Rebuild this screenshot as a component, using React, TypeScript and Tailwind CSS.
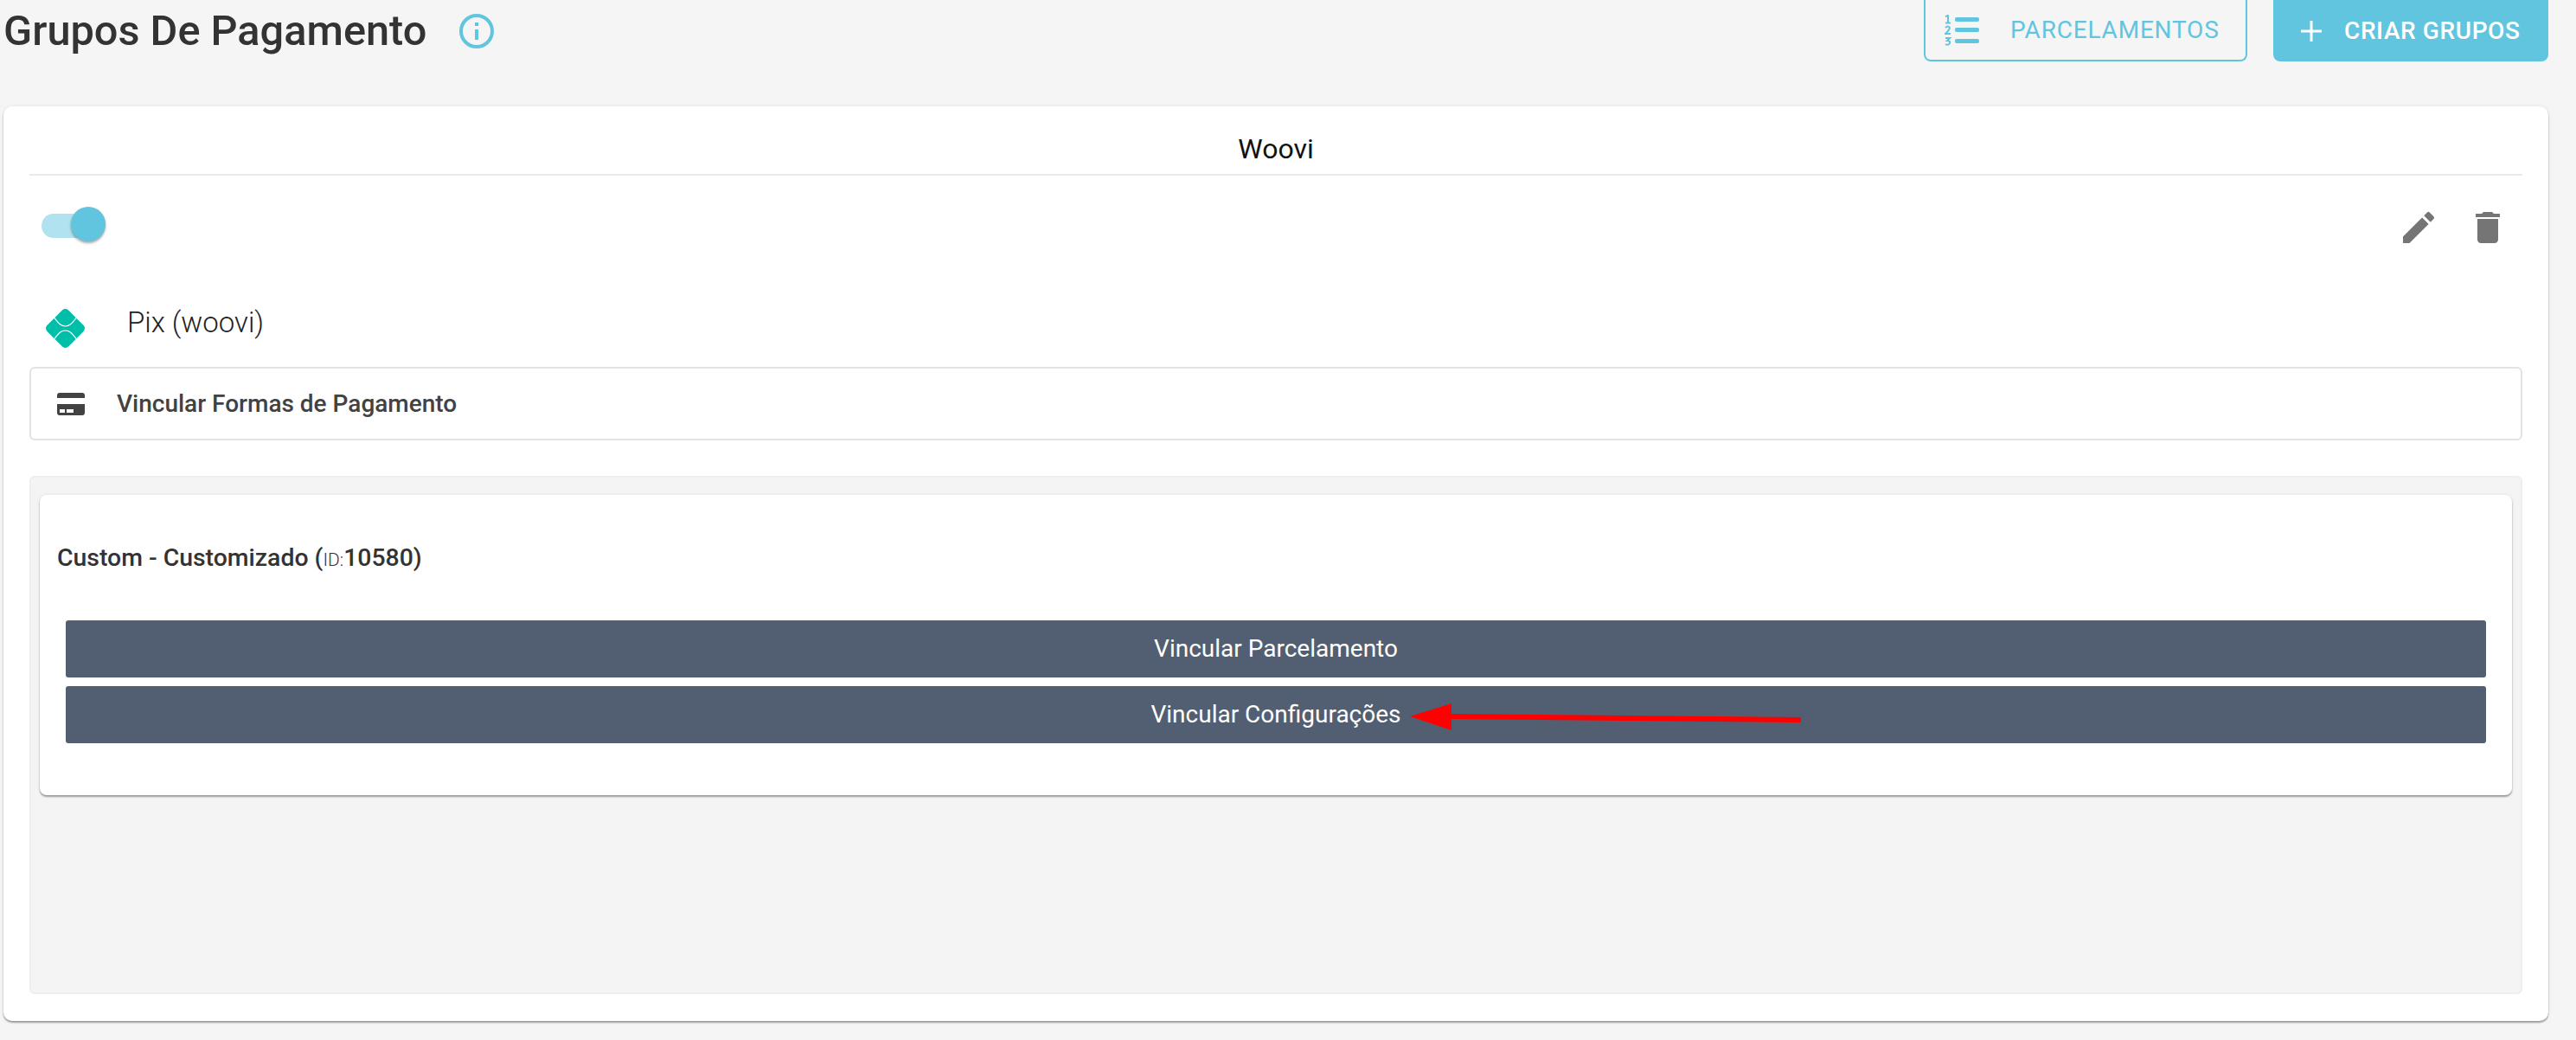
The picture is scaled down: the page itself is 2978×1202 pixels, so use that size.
import React from "react";

const F = "[font-family:Roboto,sans-serif]";

function ListIcon() {
  return (
    <svg viewBox="0 0 40 36" className="h-[36px] w-[40px] shrink-0">
      <g fill="#62c5df">
        <rect x="12" y="3" width="28" height="5" rx="2" />
        <rect x="12" y="15" width="28" height="5" rx="2" />
        <rect x="12" y="28" width="28" height="5" rx="2" />
      </g>
      <g fill="none" stroke="#62c5df" strokeWidth="2">
        <path d="M1 2L4 1V9M1 9.500H7" />
        <path d="M1 15Q4 12 6 15Q6 17 1 22H7" />
        <path d="M1 27H6L3 30Q7 30 6 33Q4 36 1 34" />
      </g>
    </svg>
  );
}

function PixLogo() {
  return (
    <svg viewBox="0 0 45 45" className="h-[45px] w-[45px] shrink-0">
      <rect x="5.130" y="5.130" width="34.750" height="34.750" rx="5" transform="rotate(45 22.500 22.500)" fill="#00bfa9" />
      <path d="M5 5C13 13 15 20 22.500 20S32 13 40 5M5 40C13 32 15 25 22.500 25S32 32 40 40" fill="none" stroke="#fff" strokeWidth="1.200" />
    </svg>
  );
}

function MuiIcon({ d }: { d: string }) {
  return (
    <svg viewBox="0 0 24 24" className="h-[48px] w-[48px] fill-[#757575]">
      <path d={d} />
    </svg>
  );
}

function BarButton({ label }: { label: string }) {
  return (
    <button className={`h-[66px] w-full rounded-[3px] bg-[#525f72] text-[28px] text-white ${F}`}>{label}</button>
  );
}

export default function App() {
  return (
    <div className={`relative h-[1202px] overflow-hidden bg-[#f5f5f5] ${F}`}>
      <header className="flex h-[123px] items-start justify-between pr-[32px] pl-[4px]">
        <div className="flex items-center gap-[38px] pt-[13px]">
          <h1 className="text-[48.700px] leading-[46px] font-medium text-[#333333]">Grupos De Pagamento</h1>
          <svg viewBox="0 0 40 40" className="h-[40px] w-[40px] fill-none stroke-[#62c5df]">
            <circle cx="20" cy="20" r="18" strokeWidth="4" />
            <path d="M20 18v12M20 10v4" strokeWidth="4" />
          </svg>
        </div>
        <div className="flex h-[71px] gap-[30px]">
          <button className="flex w-[374px] items-center rounded-b-[8px] border-x-2 border-b-2 border-[#62c5df] pl-[22px] text-[#62c5df]">
            <ListIcon />
            <span className="ml-[36px] text-[28px] tracking-[0.8px]">PARCELAMENTOS</span>
          </button>
          <button className="flex w-[318px] items-center rounded-b-[8px] bg-[#62c5df] pl-[32px] text-white">
            <svg viewBox="0 0 24 24" className="h-[24px] w-[24px] stroke-white" strokeWidth="3">
              <path d="M12 0v24M0 12h24" />
            </svg>
            <span className="ml-[26px] text-[28px] font-medium tracking-[0.6px]">CRIAR GRUPOS</span>
          </button>
        </div>
      </header>

      <main className="ml-[4px] flex h-[1057px] w-[2942px] flex-col rounded-[10px] bg-white px-[30px] pb-[31px] shadow-[0_2px_2px_rgba(0,0,0,0.35),0_0_4px_rgba(0,0,0,0.08)]">
        <div className="flex h-[80px] shrink-0 items-center justify-center border-b-2 border-[#eaeaee] pt-[19px] text-[32px] text-[#111111]">
          Woovi
        </div>
        <div className="flex h-[146px] shrink-0 items-start justify-between pt-[36px] pr-[16px] pl-[14px]">
          <div className="relative h-[40px] w-[74px]">
            <div className="absolute top-[8px] left-0 h-[28px] w-[68px] rounded-full bg-[#b1e2ef]" />
            <div className="absolute top-0 left-[34px] h-[40px] w-[40px] rounded-full bg-[#62c5df] shadow-[0_2px_3px_rgba(0,0,0,0.35)]" />
          </div>
          <div className="flex gap-[32px]">
            <MuiIcon d="M3 17.250V21h3.750L17.810 9.940l-3.750-3.750L3 17.250zM20.710 7.040c.39-.39.39-1.020 0-1.410l-2.340-2.340a.9959.9959 0 0 0-1.410 0l-1.830 1.830 3.750 3.750 1.830-1.830z" />
            <MuiIcon d="M6 19c0 1.100.9 2 2 2h8c1.100 0 2-.9 2-2V7H6v12zM19 4h-3.500l-1-1h-5l-1 1H5v2h14V4z" />
          </div>
        </div>
        <div className="flex h-[75px] shrink-0 items-start pt-[8px] pl-[19px]">
          <PixLogo />
          <span className="ml-[49px] text-[33px] leading-[32px] font-light text-[#222222]">Pix (woovi)</span>
        </div>
        <div className="flex h-[85px] shrink-0 items-center rounded-[6px] border-2 border-[#e2e2e2] pl-[30px]">
          <svg viewBox="0 0 32 26" className="h-[26px] w-[32px] fill-[#424242]">
            <path d="M3 0h26a3 3 0 0 1 3 3v3H0V3a3 3 0 0 1 3-3z" />
            <path fillRule="evenodd" d="M0 13h32v10a3 3 0 0 1-3 3H3a3 3 0 0 1-3-3zM3 19v4h6v-4zM11 19v4h8v-4z" />
          </svg>
          <span className="ml-[37px] text-[28px] font-medium text-[#424242]">Vincular Formas de Pagamento</span>
        </div>
        <section className="mt-[41px] flex-1 rounded-[6px] border-2 border-[#eeeeee] bg-[#f4f4f4] px-[10px] pt-[20px]">
          <div className="flex h-[347px] flex-col rounded-[8px] bg-white px-[30px] shadow-[0_2px_2px_rgba(0,0,0,0.35),0_0_4px_rgba(0,0,0,0.08)]">
            <p className="-ml-[10px] pt-[57px] text-[28.4px] leading-[32px] font-medium text-[#333333]">
              Custom - Customizado (<span className="text-[21px] font-light">ID:</span>10580)
            </p>
            <div className="mt-[54px] flex flex-col gap-[10px]">
              <BarButton label="Vincular Parcelamento" />
              <BarButton label="Vincular Configurações" />
            </div>
          </div>
        </section>
      </main>

      <svg viewBox="0 0 2978 1202" className="pointer-events-none absolute top-0 left-0 h-[1202px] w-[2978px]">
        <path d="M1630 828L1678 813V825L2082 829V835L1678 831V844Z" fill="#ff0000" />
      </svg>
    </div>
  );
}
